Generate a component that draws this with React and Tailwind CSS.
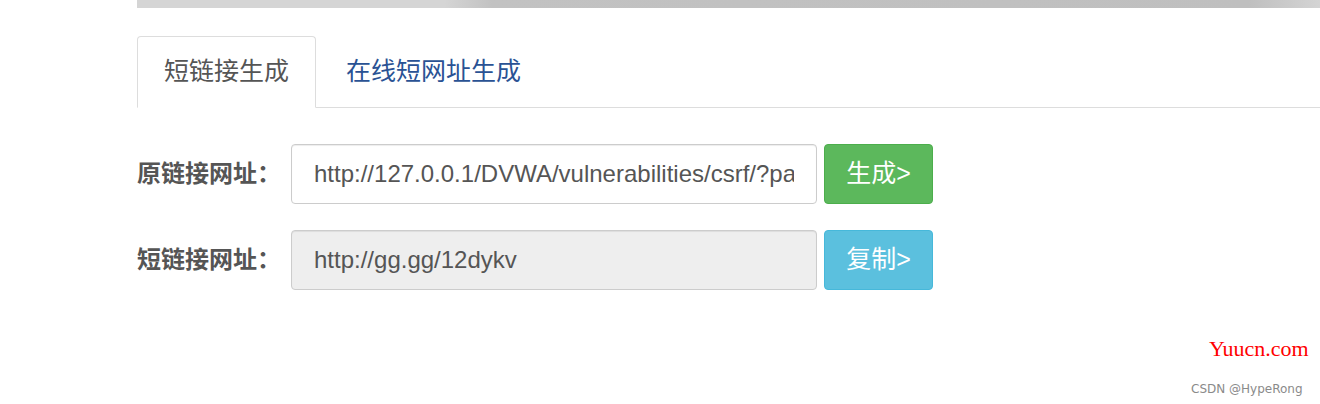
import React from 'react';

const FONT = "font-[family-name:'Liberation_Sans','Noto_Sans_CJK_SC',sans-serif]";

function Row({ label, value, disabled, btn, btnClass }) {
  return (
    <div className="flex items-center h-[60px]">
      <label className="w-[154px] text-[24px] font-bold text-[#555]">{label}</label>
      <input
        readOnly
        disabled={disabled}
        value={value}
        className={
          'w-[526px] h-[60px] px-[22px] border border-[#ccc] rounded-[4px] text-[24px] text-[#555] outline-none shadow-[inset_0_1px_1px_rgba(0,0,0,0.075)] ' +
          (disabled ? 'bg-[#eee]' : 'bg-white')
        }
      />
      <button className={'ml-[7px] w-[109px] h-[60px] rounded-[4px] border text-white text-[25px] ' + btnClass}>
        {btn}
      </button>
    </div>
  );
}

export default function App() {
  return (
    <div className={`relative w-[1320px] h-[404px] bg-white overflow-hidden ${FONT}`}>
      {/* top banner strip */}
      <div className="ml-[137px] h-[8px] bg-[linear-gradient(90deg,#d5d5d5_0%,#d5d5d5_26%,#c2c2c2_30%,#bfbfbf_94%,#d4d4d4_100%)]" />

      <div className="pl-[137px] pt-[28px]">
        {/* tabs */}
        <div className="flex border-b border-[#ddd] h-[72px]">
          <div className="w-[179px] -mb-px flex items-center justify-center border border-[#ddd] border-b-white rounded-t-[4px] bg-white text-[25px] text-[#555]">
            短链接生成
          </div>
          <div className="ml-[2px] px-[28px] flex items-center text-[25px] text-[#2a5294]">
            在线短网址生成
          </div>
        </div>

        <div className="mt-[36px] flex flex-col gap-[26px]">
          <Row
            label="原链接网址："
            value="http://127.0.0.1/DVWA/vulnerabilities/csrf/?password_new=123&password_conf=123&Change=Change#"
            btn="生成>"
            btnClass="bg-[#5cb85c] border-[#4cae4c]"
          />
          <Row
            label="短链接网址："
            value="http://gg.gg/12dykv"
            disabled
            btn="复制>"
            btnClass="bg-[#5bc0de] border-[#46b8da]"
          />
        </div>
      </div>

      {/* watermarks */}
      <div className="absolute left-[1209px] top-[335px] text-[22px] leading-[28px] text-[#ff0000] font-[family-name:'Liberation_Serif',serif]">
        Yuucn.com
      </div>
      <div className="absolute left-[1191px] top-[381px] text-[12px] leading-[16px] text-[#8a8a8a] font-[family-name:'DejaVu_Sans',sans-serif]">
        CSDN @HypeRong
      </div>
    </div>
  );
}
